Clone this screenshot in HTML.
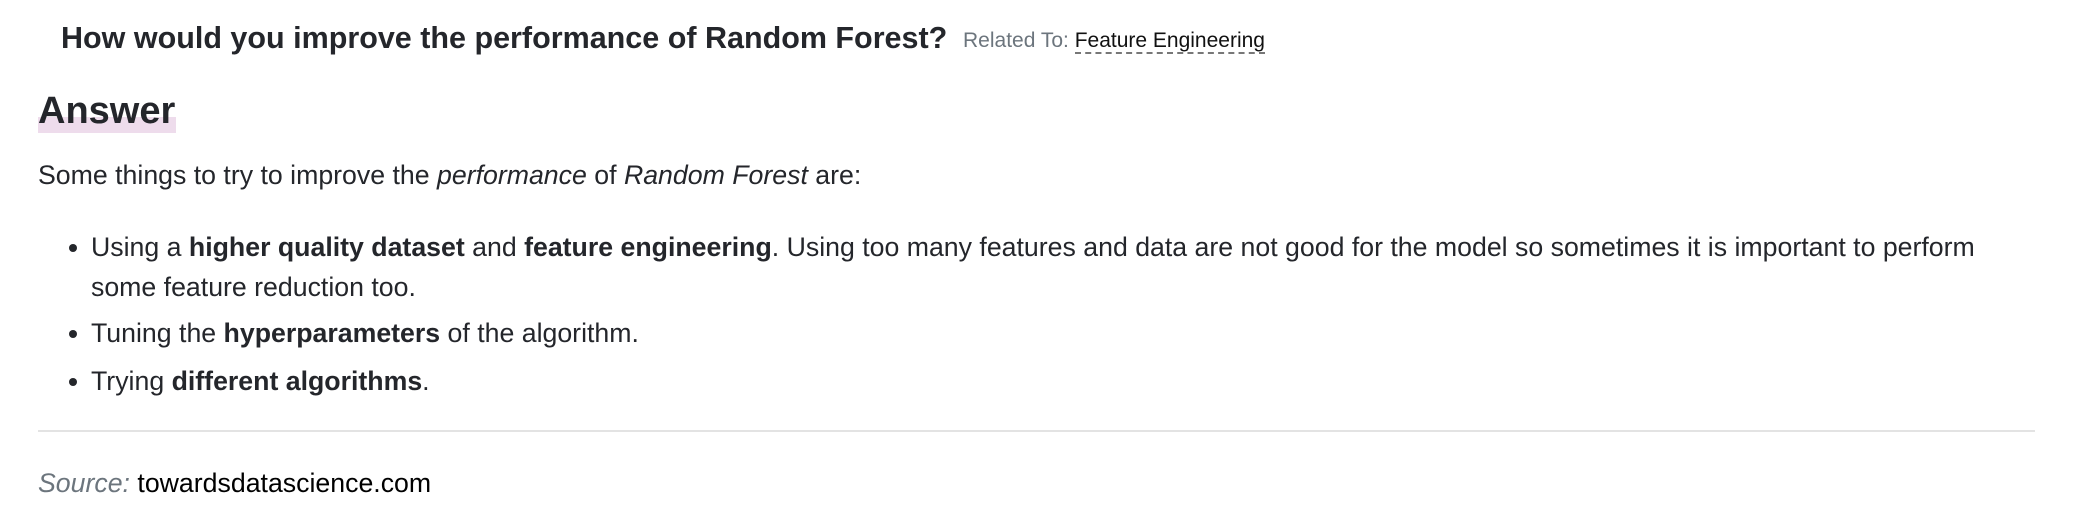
<!DOCTYPE html>
<html><head><meta charset="utf-8"><style>
html,body{margin:0;padding:0;background:#fff;width:2078px;height:528px;overflow:hidden}
body{font-family:"Liberation Sans",Arial,sans-serif;color:#24262b;position:relative}
.a{position:absolute;white-space:nowrap}
b{font-weight:bold}
.t{font-size:26.7px}
.d{position:absolute;width:8px;height:8px;border-radius:50%;background:#24262b}
</style></head><body>
<div class="a" style="left:61px;top:21px;font-size:30.5px;font-weight:bold">How would you improve the performance of Random Forest?</div>
<div class="a" style="left:963px;top:29px;font-size:21px;color:#6c757d">Related To: <span style="color:#111;border-bottom:2px dashed #777">Feature Engineering</span></div>
<div class="a" style="left:38px;top:117px;width:138px;height:16px;background:#eedcec"></div>
<div class="a" style="left:38px;top:90px;font-size:38px;font-weight:bold">Answer</div>
<div class="a t" style="left:38px;top:160px">Some things to try to improve the <i>performance</i> of <i>Random Forest</i> are:</div>
<div class="d" style="left:69px;top:244px"></div>
<div class="a t" style="left:91px;top:232px">Using a <b>higher quality dataset</b> and <b>feature engineering</b>. Using too many features and data are not good for the model so sometimes it is important to perform</div>
<div class="a t" style="left:91px;top:272px">some feature reduction too.</div>
<div class="d" style="left:69px;top:330px"></div>
<div class="a t" style="left:91px;top:318px">Tuning the <b>hyperparameters</b> of the algorithm.</div>
<div class="d" style="left:69px;top:378px"></div>
<div class="a t" style="left:91px;top:366px">Trying <b>different algorithms</b>.</div>
<div class="a" style="left:38px;top:430px;width:1997px;height:2px;background:#e3e3e3"></div>
<div class="a t" style="left:38px;top:468px"><i style="color:#6c757d">Source:</i> <span style="color:#000">towardsdatascience.com</span></div>
</body></html>
